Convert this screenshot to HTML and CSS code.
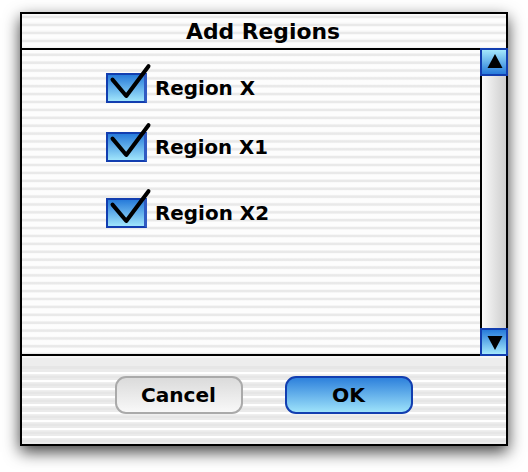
FILE: index.html
```html
<!DOCTYPE html>
<html lang="en">
<head>
<meta charset="utf-8">
<title>Add Regions</title>
<link rel="stylesheet" href="styles.css">
</head>
<body>
<main class="dialog">
  <header class="title"><svg class="label" width="156" height="28"><text x="0" y="20" textLength="154" lengthAdjust="spacingAndGlyphs">Add Regions</text></svg></header>
  <section class="content">
    <div class="options">
      <label class="option">
        <span class="box"><svg class="check" width="46" height="40" viewBox="0 0 46 40"><path d="M6.500 13.600 20.300 30 42.500 0.200"/></svg></span>
        <svg class="label" width="120" height="28"><text x="0" y="20" textLength="100" lengthAdjust="spacingAndGlyphs">Region X</text></svg>
      </label>
      <label class="option">
        <span class="box"><svg class="check" width="46" height="40" viewBox="0 0 46 40"><path d="M6.500 13.600 20.300 30 42.500 0.200"/></svg></span>
        <svg class="label" width="120" height="28"><text x="0" y="20" textLength="113" lengthAdjust="spacingAndGlyphs">Region X1</text></svg>
      </label>
      <label class="option last">
        <span class="box"><svg class="check" width="46" height="40" viewBox="0 0 46 40"><path d="M6.500 13.600 20.300 30 42.500 0.200"/></svg></span>
        <svg class="label" width="120" height="28"><text x="0" y="20" textLength="114" lengthAdjust="spacingAndGlyphs">Region X2</text></svg>
      </label>
    </div>
    <div class="scrollbar">
      <div class="arrow up"><svg width="24" height="24"><path d="M13 4 20.500 18H5.500Z"/></svg></div>
      <div class="track"></div>
      <div class="arrow down"><svg width="24" height="24"><path d="M13 20 20.500 6H5.500Z"/></svg></div>
    </div>
  </section>
  <footer class="actions">
    <button class="button"><svg class="label" width="76" height="28"><text x="0" y="21" textLength="75" lengthAdjust="spacingAndGlyphs">Cancel</text></svg></button>
    <button class="button primary"><svg class="label" width="34" height="28"><text x="0" y="21" textLength="33" lengthAdjust="spacingAndGlyphs">OK</text></svg></button>
  </footer>
</main>
</body>
</html>
```
FILE: styles.css
```css
* { box-sizing: border-box; }
body { margin: 0; height: 472px; padding: 12px 20px; background: #fff; font-family: "DejaVu Sans", sans-serif; overflow: hidden; }
.dialog {
  width: 488px; height: 434px; display: flex; flex-direction: column;
  border: 2px solid #000; box-shadow: 0 6px 15px rgba(0,0,0,.75);
  background: #fff;
}
.label { display: block; flex: none; overflow: visible; font-size: 20px; font-weight: 700; }
.title { height: 34px; display: flex; justify-content: center; padding: 5px 0 0; background: repeating-linear-gradient(#fafafa 0 1px, #f5f5f5 1px 2px, #e9e9e9 2px 4px, #f8f8f8 4px 5px, #fdfdfd 5px 8px); }
.title .label { font-size: 21px; }
.content { height: 308px; flex: none; border-top: 2px solid #000; border-bottom: 2px solid #000; display: flex; background: repeating-linear-gradient(#fdfdfd 0 2.5px, #f6f6f6 3.3px, #e9e9e9 4px 5.6px, #f8f8f8 6.2px, #fdfdfd 7px 7.88px) padding-box; }
.options { flex: 1; padding: 23px 0 0 84px; }
.option { display: flex; height: 30px; gap: 8px; margin-bottom: 29px; }
.option .label { margin-top: 2px; }
.option.last { margin-top: 36px; }
.box { width: 41px; height: 30px; border: 2px solid #123eb0; border-right: 3px solid #315bc2; background: linear-gradient(#277bda, #a0e5fb); position: relative; }
.check { position: absolute; left: -2px; top: -9px; overflow: visible; fill: none; stroke: #000; stroke-width: 4; stroke-linecap: round; stroke-linejoin: round; }
.scrollbar { width: 28px; margin: -2px -2px -2px 0; display: flex; flex-direction: column; }
.arrow { width: 28px; height: 28px; flex: none; border: 2px solid #123eb0; }
.arrow svg { display: block; }
.up { background: linear-gradient(#a4e8fc, #277bda); }
.down { background: linear-gradient(#277bda, #a4e8fc); }
.track { flex: 1; border: solid #000; border-width: 0 2px; background: linear-gradient(90deg, #fafafa, #cdcdcd); }
.actions {
  flex: 1; display: flex; gap: 42px; padding: 20px 0 0 93px;
  background:
    linear-gradient(#f6f6f6 0 2px, #ededed 2px 10px, #e6e6e6 10px 13px, #ebebeb 13px) 0 0 / 100% 16px no-repeat,
    repeating-linear-gradient(#fff 0 2px, #efefef 2px 3px, #ebebeb 3px 4px, #e6e6e6 4px 6px, #ebebeb 6px 8px);
}
.button { width: 128px; height: 38px; padding: 0; display: flex; justify-content: center; align-items: center; border: 2px solid #aaa; border-radius: 11px; font-family: inherit; background: linear-gradient(#d9d9d9, #fafafa) border-box; }
.button .label { margin-left: -1px; }
.primary { border-color: #123eb0; background: linear-gradient(#277bda, #a4e8fc) border-box; }
```
